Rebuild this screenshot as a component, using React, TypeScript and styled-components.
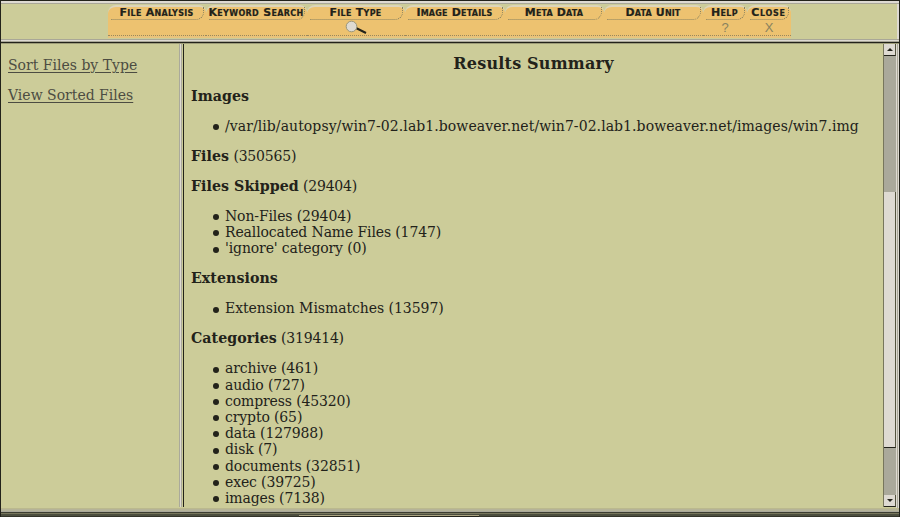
import React from "react";
import styled, { createGlobalStyle } from "styled-components";

const Global = createGlobalStyle`
  * { box-sizing: border-box; }
  body { margin: 0; background: #cccc99; overflow: hidden; }
`;

const Window = styled.div`
  width: 900px;
  height: 517px;
  display: flex;
  flex-direction: column;
  background: #cccc99;
  color: #22221a;
  font-family: "DejaVu Serif", serif;
  font-size: 14px;
  border-top: 1px solid #22221a;
  border-left: 1px solid #22221a;
  border-right: 1px solid #22221a;
`;

const TopEdge = styled.div`
  height: 3px;
  flex: none;
  background: #dedad2;
  border-bottom: 1px solid #a9a797;
`;

const Toolbar = styled.nav`
  height: 35px;
  flex: none;
  display: flex;
  padding: 1px 0 0 107px;
  border-right: 2px solid #dedad2;
`;

const Tab = styled.div<{ $w: number }>`
  width: ${(p) => p.$w}px;
  height: 31px;
  background: #edc270;
  border-radius: 8px 7px 0 0;
  border-top: 2px solid #ddd5ba;
  border-bottom: 1px dotted #99885f;
  box-shadow: 0 2px #e8c37c;
  display: flex;
  flex-direction: column;
  align-items: center;
`;

const TabFace = styled.div<{ $w: number }>`
  width: ${(p) => p.$w - 5}px;
  height: 13px;
  flex: none;
  border-bottom: 1px dotted #89825f;
  border-right: 1px dotted #89825f;
  border-radius: 0 0 8px 0;
  display: flex;
  justify-content: center;
`;

const TabText = styled.span<{ $s: number }>`
  font: bold 11px/11px "DejaVu Sans", sans-serif;
  font-variant: small-caps;
  white-space: nowrap;
  letter-spacing: ${(p) => p.$s}px;
  -webkit-text-stroke: 0.2px #22221a;
`;

const TabMark = styled.div`
  height: 15px;
  font: 13px/16px "Liberation Sans", sans-serif;
  color: #89825f;
  svg { display: block; }
`;

const Divider = styled.div`
  height: 5px;
  flex: none;
  background: linear-gradient(#a9a797 0 1px, #dedad2 1px 2px, #a9a797 2px 3px, #22221a 3px 4px, #9d9c78 4px 5px);
`;

const Panes = styled.div`
  flex: 1;
  min-height: 0;
  display: flex;
`;

const Sidebar = styled.aside`
  width: 178px;
  padding: 13px 0 0 7px;
  display: flex;
  flex-direction: column;
  gap: 14px;
  align-items: flex-start;
  line-height: 16px;
`;

const SideLink = styled.a`
  color: #4c4c42;
  text-decoration: underline;
  text-decoration-thickness: 1px;
  text-underline-offset: 2px;
`;

const Splitter = styled.div`
  width: 5px;
  height: 463px;
  background: linear-gradient(90deg, #aaa99b 0 1px, #dedad2 1px 2px, #aaa99b 2px 3px, #cccc99 3px 4px, #22221a 4px 5px);
`;

const Results = styled.main`
  flex: 1;
  height: 464px;
  overflow: hidden;
  padding: 10px 0 0 7px;
`;

const Title = styled.h1`
  margin: 0 0 15px;
  font-size: 16px;
  line-height: 19px;
  letter-spacing: 0.2px;
  text-align: center;
  padding-right: 7px;
`;

const Heading = styled.p`
  margin: 0 0 14px;
  line-height: 16px;
  letter-spacing: -0.2px;
  b {
    font-size: 14.2px;
    letter-spacing: 0.05px;
  }
`;

const List = styled.ul`
  list-style: none;
  margin: 0 0 13.8px;
  padding: 0 0 0 22px;
`;

const Item = styled.li<{ $s: number }>`
  display: flex;
  align-items: center;
  gap: 6px;
  line-height: 16.2px;
  letter-spacing: ${(p) => p.$s}px;
  white-space: nowrap;
  &::before {
    content: "";
    width: 6px;
    height: 6px;
    margin-top: 2px;
    border-radius: 50%;
    background: #22221a;
  }
`;

const Scrollbar = styled.div`
  width: 13px;
  height: 463px;
  display: flex;
  flex-direction: column;
  background: #aaa99b;
  border-left: 1px solid #77765c;
`;

const ScrollPart = styled.div<{ $h: number }>`
  height: ${(p) => p.$h}px;
  flex: none;
  background: #dedad2;
  border-right: 1px solid #55553f;
  border-bottom: 1px solid #22221a;
  display: flex;
  align-items: center;
  justify-content: center;
`;

const Track = styled.div<{ $h: number }>`
  height: ${(p) => p.$h}px;
  flex: none;
`;

const Edge = styled.div`
  width: 3px;
  background: linear-gradient(90deg, #dedad2 0 1px, #a9a797 1px 2px, #dedad2 2px 3px);
`;

const BottomEdge = styled.footer`
  height: 9px;
  flex: none;
  background: linear-gradient(#bbb98e 0 1px, #b5b398 1px 3px, #aaa99b 3px 4px, #3c3d31 4px 5px, #77765c 5px 6px, #4c4e3e 6px 8px, #33342a 8px 9px);
  display: flex;
  align-items: flex-end;
  padding-left: 298px;
`;

const BottomTab = styled.div`
  width: 180px;
  height: 2px;
  background: #22221a;
  border-top: 1px solid #aaa381;
`;

const tabs = [
  { label: "File Analysis", w: 98, s: 0.28 },
  { label: "Keyword Search", w: 101, s: 0.35 },
  { label: "File Type", w: 98, s: 0.3 },
  { label: "Image Details", w: 100, s: 0.2 },
  { label: "Meta Data", w: 99, s: 0.15 },
  { label: "Data Unit", w: 99, s: 0.15 },
  { label: "Help", w: 44, s: 0.4 },
  { label: "Close", w: 44, s: 0.75 },
];

const sections = [
  {
    name: "Images",
    spacing: 0.07,
    items: ["/var/lib/autopsy/win7-02.lab1.boweaver.net/win7-02.lab1.boweaver.net/images/win7.img"],
  },
  { name: "Files", count: 350565, items: [] },
  { name: "Files Skipped", count: 29404, items: ["Non-Files (29404)", "Reallocated Name Files (1747)", "'ignore' category (0)"] },
  { name: "Extensions", spacing: -0.05, items: ["Extension Mismatches (13597)"] },
  {
    name: "Categories",
    count: 319414,
    items: ["archive (461)", "audio (727)", "compress (45320)", "crypto (65)", "data (127988)", "disk (7)", "documents (32851)", "exec (39725)", "images (7138)"],
  },
];

const Magnifier = () => (
  <svg width="22" height="14" viewBox="0 0 22 14">
    <path d="M11 8L21 13" stroke="#22221a" strokeWidth="2" />
    <circle cx="6.5" cy="6.5" r="5.3" fill="#dedad2" stroke="#99967c" />
  </svg>
);

const Arrow = ({ up }: { up?: boolean }) => (
  <svg width="6" height="3" viewBox="0 0 6 3">
    <path d={up ? "M3 0L6 3H0Z" : "M0 0H6L3 3Z"} fill="#22221a" />
  </svg>
);

const marks: Record<string, React.ReactNode> = { "File Type": <Magnifier />, Help: "?", Close: "X" };

export default function App() {
  return (
    <>
      <Global />
      <Window>
        <TopEdge />
        <Toolbar>
          {tabs.map((t) => (
            <Tab key={t.label} $w={t.w}>
              <TabFace $w={t.w}>
                <TabText $s={t.s}>{t.label}</TabText>
              </TabFace>
              <TabMark>{marks[t.label]}</TabMark>
            </Tab>
          ))}
        </Toolbar>
        <Divider />
        <Panes>
          <Sidebar>
            <SideLink>Sort Files by Type</SideLink>
            <SideLink>View Sorted Files</SideLink>
          </Sidebar>
          <Splitter />
          <Results>
            <Title>Results Summary</Title>
            {sections.map((s) => (
              <React.Fragment key={s.name}>
                <Heading>
                  <b>{s.name}</b>
                  {s.count !== undefined && ` (${s.count})`}
                </Heading>
                {s.items.length > 0 && (
                  <List>
                    {s.items.map((i) => (
                      <Item key={i} $s={s.spacing ?? -0.13}>{i}</Item>
                    ))}
                  </List>
                )}
              </React.Fragment>
            ))}
          </Results>
          <Scrollbar>
            <ScrollPart $h={12}><Arrow up /></ScrollPart>
            <Track $h={136} />
            <ScrollPart $h={256} />
            <Track $h={47} />
            <ScrollPart $h={12}><Arrow /></ScrollPart>
          </Scrollbar>
          <Edge />
        </Panes>
        <BottomEdge>
          <BottomTab />
        </BottomEdge>
      </Window>
    </>
  );
}
